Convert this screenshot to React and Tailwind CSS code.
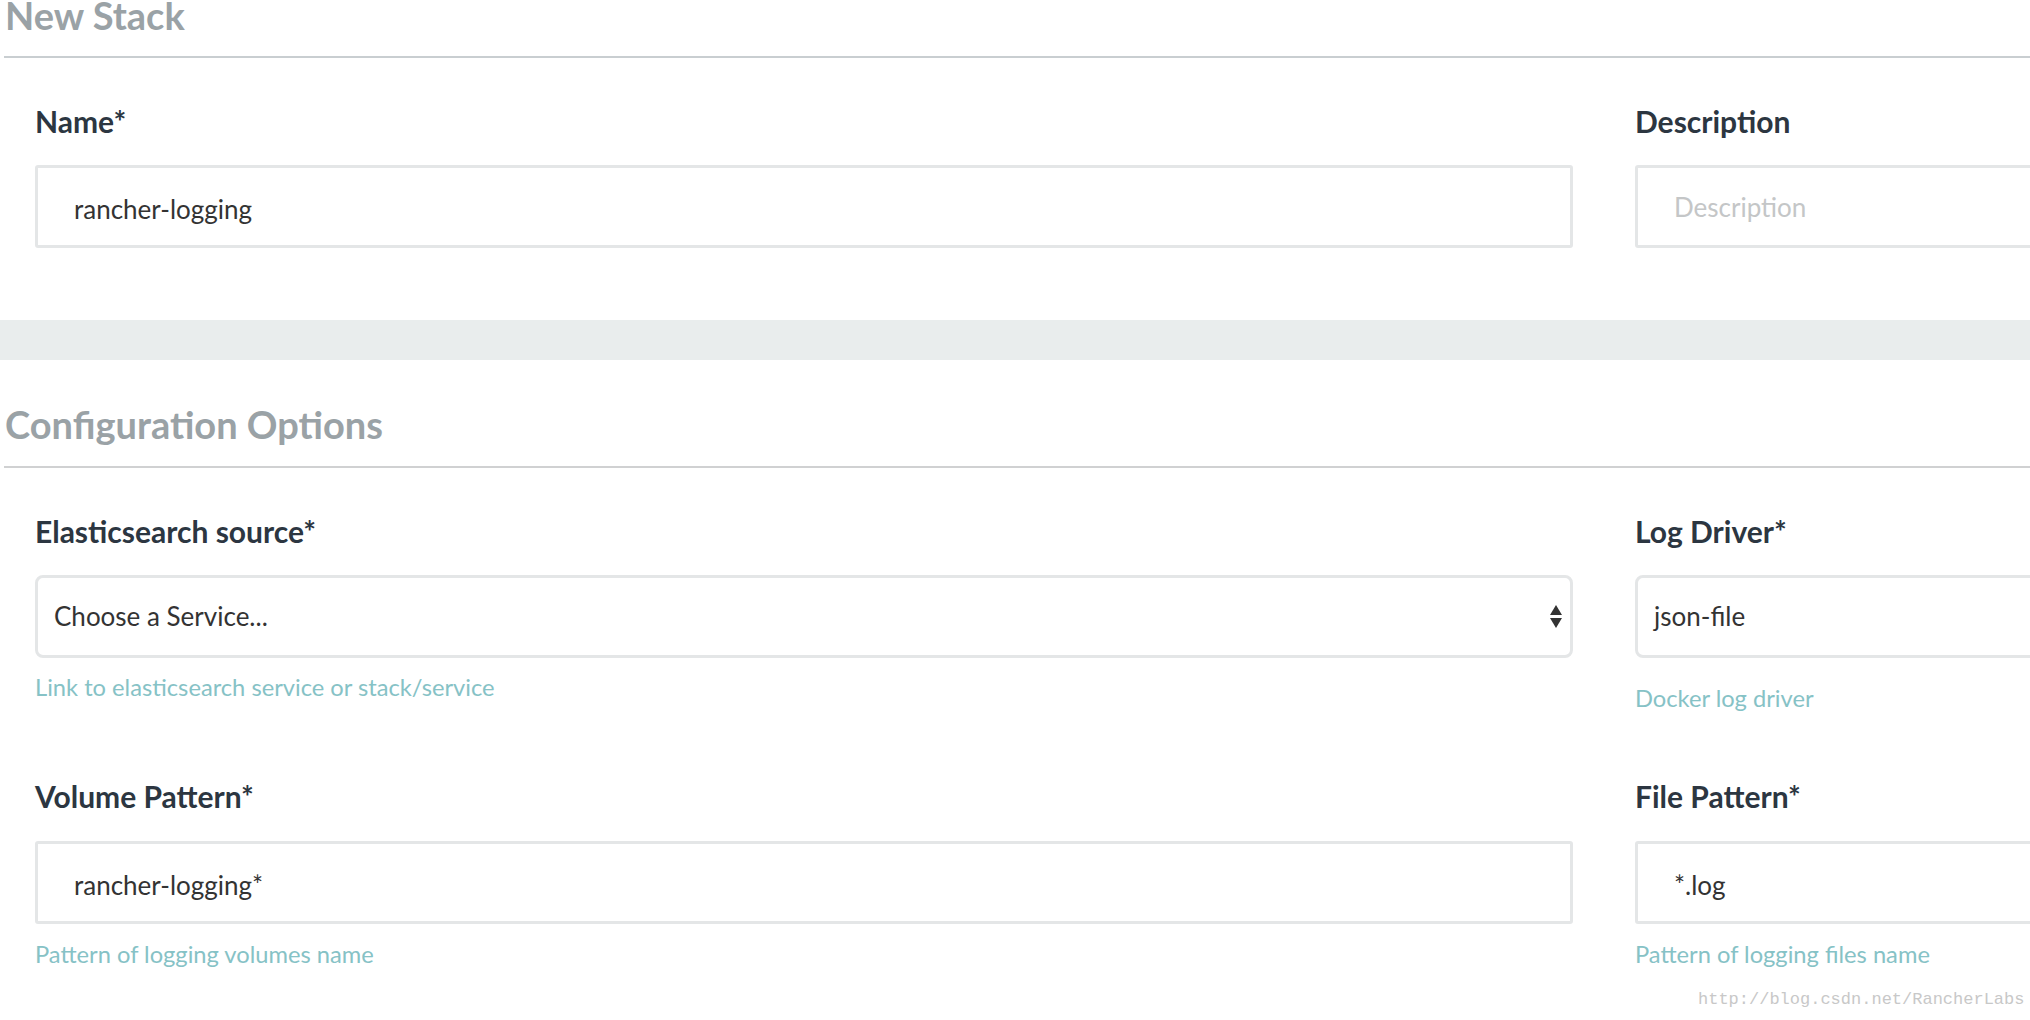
import React from "react";

const font = { fontFamily: "Lato, 'Noto Sans', sans-serif" };

function Label({ children }) {
  return (
    <div className="text-[30px] leading-[30px] font-bold text-[#2c3641] whitespace-nowrap">
      {children}
    </div>
  );
}

function Box({ children, rounded = "rounded-[3px]", pad = "pl-[36px]", textPad = "pt-[5px]", extra = null }) {
  return (
    <div
      className={`h-[83px] border-[3px] border-[#e4e6e7] bg-white ${rounded} ${pad} pr-[8px] flex items-center justify-between text-[26px] text-[#333333] whitespace-nowrap`}
    >
      <span className={textPad}>{children}</span>
      {extra}
    </div>
  );
}

function Helper({ children, mt }) {
  return (
    <div className={`${mt} text-[23.7px] leading-[24px] text-[#86c2c6] whitespace-nowrap`}>
      {children}
    </div>
  );
}

function Arrows() {
  return (
    <svg width="12" height="24" viewBox="0 0 12 24">
      <polygon points="6,0 12,10 0,10" fill="#333" />
      <polygon points="0,13 12,13 6,23" fill="#333" />
    </svg>
  );
}

export default function App() {
  return (
    <div className="w-[2030px] h-[1020px] overflow-hidden bg-white relative" style={font}>
      {/* New Stack header */}
      <div className="mt-[-4px] ml-[4px] h-[62px] border-b-2 border-[#c9ced1]">
        <div className="text-[38px] leading-[38px] font-bold text-[#9aa2a6] pl-[1px]">New Stack</div>
      </div>

      <div className="pl-[35px] grid grid-cols-[1538px_1538px] gap-x-[62px]">
        <div className="mt-[48px]">
          <Label>Name*</Label>
          <div className="mt-[29px]">
            <Box>rancher-logging</Box>
          </div>
        </div>
        <div className="mt-[48px]">
          <Label>Description</Label>
          <div className="mt-[29px]">
            <Box textPad="pt-[2px]">
              <span className="text-[#c4c6c7]">Description</span>
            </Box>
          </div>
        </div>
      </div>

      {/* gray band */}
      <div className="mt-[72px] h-[40px] bg-[#e9eded]" />

      {/* Configuration Options header */}
      <div className="mt-[45px] ml-[4px] h-[63px] border-b-2 border-[#d0d1d2]">
        <div className="text-[38px] leading-[38px] font-bold text-[#9aa2a6] pl-[1px]">Configuration Options</div>
      </div>

      <div className="pl-[35px] grid grid-cols-[1538px_1538px] gap-x-[62px]">
        <div className="mt-[48px]">
          <Label>Elasticsearch source*</Label>
          <div className="mt-[29px]">
            <Box rounded="rounded-[8px]" pad="pl-[16px]" textPad="pt-0" extra={<Arrows />}>
              Choose a Service...
            </Box>
          </div>
          <Helper mt="mt-[17px]">Link to elasticsearch service or stack/service</Helper>
        </div>
        <div className="mt-[48px]">
          <Label>Log Driver*</Label>
          <div className="mt-[29px]">
            <Box rounded="rounded-[8px]" pad="pl-[16px]" textPad="pt-0">json-file</Box>
          </div>
          <Helper mt="mt-[28px]">Docker log driver</Helper>
        </div>

        <div className="mt-[71px]">
          <Label>Volume Pattern*</Label>
          <div className="mt-[30px]">
            <Box>rancher-logging*</Box>
          </div>
          <Helper mt="mt-[18px]">Pattern of logging volumes name</Helper>
        </div>
        <div className="mt-[71px]">
          <Label>File Pattern*</Label>
          <div className="mt-[30px]">
            <Box>*.log</Box>
          </div>
          <Helper mt="mt-[18px]">Pattern of logging files name</Helper>
        </div>
      </div>

      <div
        className="absolute left-[1698px] top-[990px] text-[17px] leading-[20px] text-[#c8c8c8] whitespace-nowrap"
        style={{ fontFamily: "'Liberation Mono', monospace" }}
      >
        http://blog.csdn.net/RancherLabs
      </div>
    </div>
  );
}
